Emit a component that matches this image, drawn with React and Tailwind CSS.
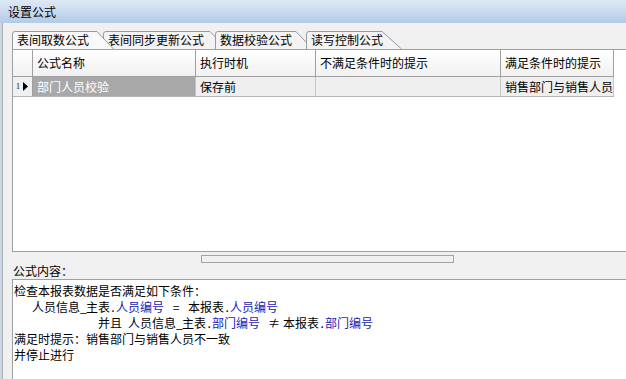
import React from 'react';

const FONT = { fontFamily: '"SimSun", "Noto Sans CJK SC", "Liberation Sans", sans-serif' };

// tab shape: left edge + rounded corner, slanted right edge
const Tab = ({ label, width, slant = 17, overlap = 0, active = false }) => (
  <div className={`relative h-[18px] flex items-center shrink-0 ${active ? 'z-10' : ''}`} style={{ width, marginLeft: -overlap }}>
    <svg className="absolute inset-0" width={width} height="18" viewBox={`0 0 ${width} 18`}>
      <path
        d={`M0.5 18 V3 Q0.5 0.5 3 0.5 H${width - slant} L${width - 0.5} 18`}
        fill={active ? '#f9f9f9' : '#f3f3f3'}
        stroke="#9a9a9a"
        strokeWidth="1"
      />
    </svg>
    <span className="relative pl-[5px] text-[12px] leading-none text-black">{label}</span>
  </div>
);

const Blue = ({ children }) => <span className="text-[#1a1ab4]">{children}</span>;
// half-width glyph cell, like the fixed-width font in the original
const H = ({ children }) => <span className="inline-block w-[6px] text-center">{children}</span>;

const App = () => {
  const columns = [
    { title: '公式名称', w: 'w-[163px]' },
    { title: '执行时机', w: 'w-[120px]' },
    { title: '不满足条件时的提示', w: 'w-[185px]' },
    { title: '满足条件时的提示', w: 'w-[113px]' },
  ];

  return (
    <div className="w-[626px] h-[379px] overflow-hidden flex flex-col bg-[#f0f0f0] text-black" style={FONT}>
      {/* title bar */}
      <div className="h-[23px] shrink-0 flex items-center pl-[8px] bg-gradient-to-b from-[#dfe9f6] to-[#b2cbe7] text-[12px]">
        设置公式
      </div>

      <div className="flex-1 flex min-h-0 border-l-2 border-[#c9d6e6]">
        <div className="flex-1 flex flex-col min-w-0 border-l border-[#b0b0b0] pl-[9px]">
          {/* tabs */}
          <div className="mt-[8px] h-[18px] flex shrink-0">
            <Tab label="表间取数公式" width={102} active />
            <Tab label="表间同步更新公式" width={124} overlap={11} />
            <Tab label="数据校验公式" width={98} overlap={12} />
            <Tab label="读写控制公式" width={96} slant={20} overlap={7} />
          </div>

          {/* grid */}
          <div className="h-[203px] shrink-0 bg-white border border-r-0 border-[#a0a0a0] overflow-hidden">
            <div className="flex h-[27px] w-[601px] border-b border-[#a0a0a0] bg-gradient-to-b from-white to-[#f1f1f1] text-[12px]">
              <div className="w-[20px] border-r border-[#a0a0a0]" />
              {columns.map((c) => (
                <div key={c.title} className={`${c.w} flex items-center pl-[4px] border-r border-[#a0a0a0] whitespace-nowrap overflow-hidden`}>
                  {c.title}
                </div>
              ))}
            </div>
            <div className="flex h-[20px] w-[601px] border-b border-[#b4b4b4] text-[12px]">
              <div className="w-[20px] flex items-center pl-[3px] gap-[3px] bg-[#f0f0f0] border-r border-[#a0a0a0]">
                <span className="text-[8px] leading-none" style={{ fontFamily: '"Liberation Serif", serif' }}>1</span>
                <svg width="5" height="9" viewBox="0 0 5 9"><path d="M0 0 L5 4.5 L0 9 Z" fill="#000" /></svg>
              </div>
              <div className="w-[163px] flex items-center pl-[4px] bg-[#a8a8a8] text-white border-r border-[#c4c4c4]">部门人员校验</div>
              <div className="w-[120px] flex items-center pl-[4px] bg-[#efefef] border-r border-[#c4c4c4]">保存前</div>
              <div className="w-[185px] bg-[#efefef] border-r border-[#c4c4c4]" />
              <div className="w-[113px] flex items-center pl-[4px] bg-[#efefef] border-r border-[#c4c4c4] whitespace-nowrap overflow-hidden">销售部门与销售人员不一致</div>
            </div>
          </div>

          {/* splitter + label */}
          <div className="h-[27px] shrink-0 flex flex-col">
            <div className="pt-[3px] pl-[189px]">
              <div className="w-[253px] h-[8px] border border-[#a4a4a4] bg-[#f0f0f0]" />
            </div>
            <div className="text-[12px] leading-[14px] pl-[1px] mt-[1px]">公式内容：</div>
          </div>

          {/* memo */}
          <div className="flex-1 bg-white border-t border-l border-[#a0a0a0] pt-[3px] pl-[1px] text-[12px] leading-[16px] whitespace-nowrap">
            <div>检查本报表数据是否满足如下条件：</div>
            <div className="pl-[18px]">
              人员信息<H>_</H>主表<H>.</H><Blue>人员编号</Blue>
              <span className="inline-block mx-[8px] w-[8px] text-center">=</span>
              本报表<H>.</H><Blue>人员编号</Blue>
            </div>
            <div className="pl-[84px]">
              并且<span className="inline-block w-[6px]" />人员信息<H>_</H>主表<H>.</H><Blue>部门编号</Blue>
              <span className="inline-block ml-[8px] mr-[7px] w-[8px] text-center">≠</span>
              本报表<H>.</H><Blue>部门编号</Blue>
            </div>
            <div>满足时提示：销售部门与销售人员不一致</div>
            <div>并停止进行</div>
          </div>
        </div>
      </div>
    </div>
  );
};

export default App;
